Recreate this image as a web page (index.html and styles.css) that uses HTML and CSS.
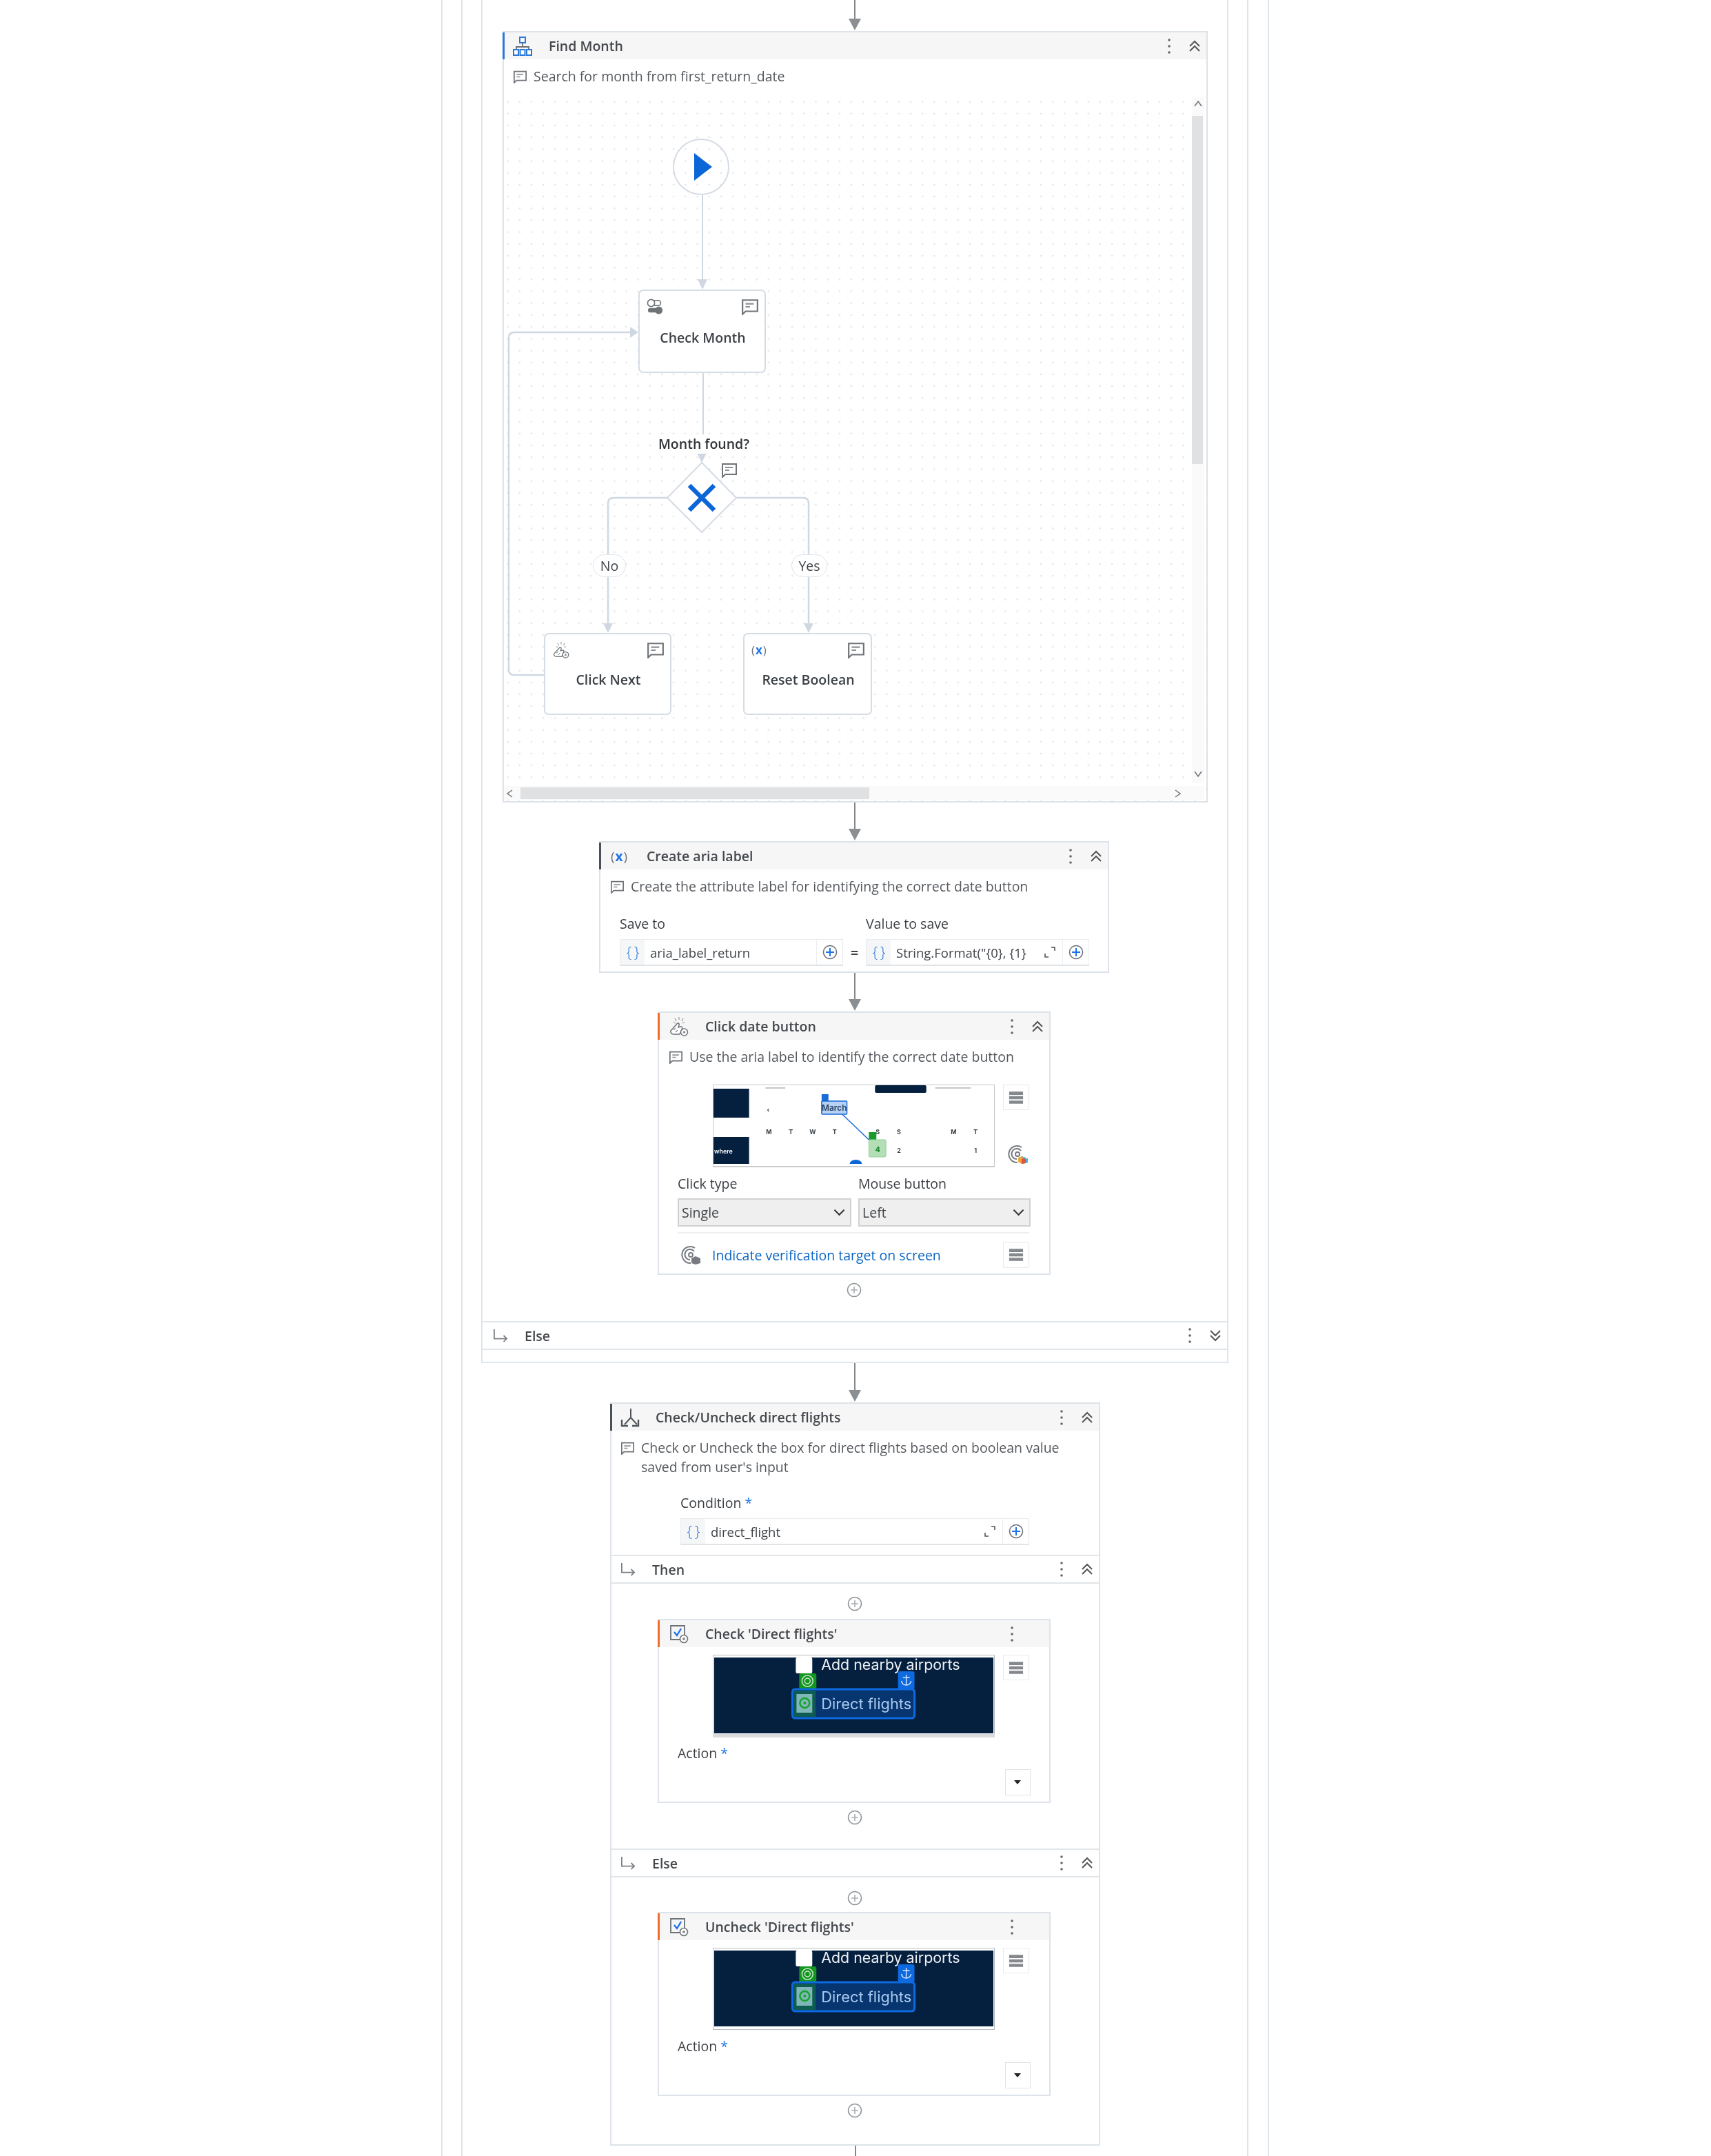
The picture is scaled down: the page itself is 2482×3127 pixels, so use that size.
FILE: index.html
```html
<!DOCTYPE html>
<html>
  <head>
    <meta charset="UTF-8">
    <title>Find Month workflow</title>
    <link rel="stylesheet" href="styles.css">
  </head>
  <body>
    <svg class="defs" width="0" height="0">
      <symbol id="i-comment" viewBox="0 0 24 22">
        <path d="M2 2H22V17H6L2 21Z" fill="#fff" stroke="#6f7378" stroke-width="2"/>
        <path d="M6 7H17M6 11H12" stroke="#8c9095" stroke-width="2"/>
      </symbol>
      <symbol id="i-kebab" viewBox="0 0 6 24">
        <circle cx="3" cy="3" r="1.8" fill="#666"/>
        <circle cx="3" cy="12" r="1.8" fill="#666"/>
        <circle cx="3" cy="21" r="1.8" fill="#666"/>
      </symbol>
      <symbol id="i-up" viewBox="0 0 18 18">
        <path d="M2 9L9 2L16 9M2 16L9 9L16 16" fill="none" stroke="#555" stroke-width="2"/>
      </symbol>
      <symbol id="i-down" viewBox="0 0 18 18">
        <path d="M2 2L9 9L16 2M2 9L9 16L16 9" fill="none" stroke="#555" stroke-width="2"/>
      </symbol>
      <symbol id="i-else" viewBox="0 0 24 22">
        <path d="M2 1V16H22M17 11L22 16L17 21" fill="none" stroke="#7d8186" stroke-width="2"/>
      </symbol>
      <symbol id="i-plus" viewBox="0 0 22 22">
        <circle cx="11" cy="11" r="9.5" fill="#fff" stroke="#8d9296" stroke-width="1.6"/>
        <path d="M11 6V16M6 11H16" stroke="#a9adb1" stroke-width="1.6"/>
      </symbol>
      <symbol id="i-plus-blue" viewBox="0 0 22 22">
        <circle cx="11" cy="11" r="9.5" fill="#fff" stroke="#6d7277" stroke-width="1.6"/>
        <path d="M11 5V17M5 11H17" stroke="#1a73e8" stroke-width="2"/>
      </symbol>
      <symbol id="i-expand" viewBox="0 0 18 18">
        <path d="M11 2H16V7M2 11V16H7" fill="none" stroke="#555" stroke-width="1.6"/>
      </symbol>
      <symbol id="i-click" viewBox="0 0 28 28">
        <path d="M14 0V4M8 2L10 6M20 2L18 6M6 8L9 9M22 8L19 9" stroke="#9a9ea2" stroke-width="1.3"/>
        <path d="M2 20L11 10C12 8 15 9 14 12L13 15L17 14C19 14 19 16 18 18L15 25H6C3 25 1 22 2 20Z" fill="#fff" stroke="#6f7378" stroke-width="1.5"/>
        <path d="M6 19L9 16M9 22L12 19" stroke="#8c9095" stroke-width="1.3"/>
        <circle cx="21.500" cy="22" r="5" fill="#fff" stroke="#6f7378" stroke-width="1.5"/>
        <circle cx="21.500" cy="22" r="1.800" fill="#8c9095"/>
      </symbol>
      <symbol id="i-check" viewBox="0 0 28 28">
        <path d="M16 22H2V2H22V15" fill="none" stroke="#6f7378" stroke-width="1.8"/>
        <path d="M7 11L11 16L17 6" fill="none" stroke="#1a73e8" stroke-width="2.4"/>
        <circle cx="21" cy="21" r="5.5" fill="#fff" stroke="#6f7378" stroke-width="1.6"/>
        <circle cx="21" cy="21" r="2" fill="#8c9095"/>
      </symbol>
      <symbol id="i-if" viewBox="0 0 28 28">
        <path d="M15 1V14L6 24M15 14L24 24" fill="none" stroke="#50565c" stroke-width="2"/>
        <path d="M2 17V26H11M26 17V26H17" fill="none" stroke="#50565c" stroke-width="2.4"/>
      </symbol>
      <symbol id="i-scope" viewBox="0 0 28 28">
        <rect x="10" y="1" width="8" height="8" fill="#fff" stroke="#2a78d8" stroke-width="2"/>
        <path d="M14 9V15M5 18V15H23V18" fill="none" stroke="#6b6f74" stroke-width="1.8"/>
        <path d="M1 19H8V27H1ZM10.500 19H17.500V27H10.500ZM20 19H27V27H20Z" fill="#fff" stroke="#2a78d8" stroke-width="2"/>
      </symbol>
      <symbol id="i-toggles" viewBox="0 0 28 26">
        <rect x="2" y="3" width="20" height="8" rx="4" fill="#fff" stroke="#6f7378" stroke-width="1.8"/>
        <circle cx="7" cy="7" r="5.500" fill="#fff" stroke="#6f7378" stroke-width="1.8"/>
        <rect x="2" y="15" width="18" height="7" rx="3.500" fill="#6f7378"/>
        <circle cx="19" cy="18.500" r="6" fill="#6f7378"/>
      </symbol>
      <symbol id="i-menu" viewBox="0 0 24 24">
        <path d="M1 2.500H23V7.500H1ZM1 9.500H23V14.500H1ZM1 16.500H23V21.500H1Z" fill="#85888c"/>
      </symbol>
      <symbol id="i-target" viewBox="0 0 30 28">
        <path d="M20 4A12 12 0 1 0 14 26" fill="none" stroke="#777b80" stroke-width="2"/>
        <path d="M19 9A7.500 7.500 0 1 0 13 21" fill="none" stroke="#777b80" stroke-width="2"/>
        <circle cx="14" cy="14" r="3" fill="none" stroke="#777b80" stroke-width="2"/>
      </symbol>
    </svg>

    <div class="rail-outer">
      <div class="rail-inner">
        <div class="if-box">
          <div class="connector conn-top"></div>

          <section class="card card-find">
            <div class="card-head accent-blue">
              <svg class="head-icon"><use href="#i-scope"/></svg>
              <span class="card-title">Find Month</span>
              <svg class="kebab"><use href="#i-kebab"/></svg>
              <svg class="chev"><use href="#i-up"/></svg>
            </div>
            <div class="card-desc desc-find">
              <svg class="desc-icon"><use href="#i-comment"/></svg>
              <span>Search for month from first_return_date</span>
            </div>

            <div class="canvas">
              <svg class="wires" width="1019" height="1022">
                <g fill="none" stroke="#cfd8e2">
                  <path d="M288 143V268" stroke-width="2"/>
                  <path d="M58 839H15Q7 839 7 831V350Q7 342 15 342H185" stroke-width="2.500"/>
                  <path d="M289 401V490" stroke-width="2"/>
                  <path d="M237 582H159Q151 582 151 590V766" stroke-width="2.500"/>
                  <path d="M337 582H434Q442 582 442 590V766" stroke-width="2.500"/>
                </g>
                <g fill="#cfd8e2">
                  <path d="M281 265H295L288 280Z"/>
                  <path d="M183 334V350L195 342Z"/>
                  <path d="M280 517H294L287 531Z"/>
                  <path d="M144 764H158L151 778Z"/>
                  <path d="M435 764H449L442 778Z"/>
                </g>
                <path d="M287 531L337 582L287 632L237 582Z" fill="#fff" stroke="#d5dce4" stroke-width="2" stroke-linejoin="round"/>
                <path d="M269 564L305 600M305 564L269 600" stroke="#0b66d8" stroke-width="6.500"/>
                <path d="M276 82V122L302 102Z" fill="#0b66d8"/>
              </svg>
              <div class="start-node"></div>
              <svg class="wire-comment"><use href="#i-comment"/></svg>
              <div class="gate-label">Month found?</div>
              <div class="pill pill-no">No</div>
              <div class="pill pill-yes">Yes</div>

              <div class="node node-check">
                <div class="node-icons">
                  <svg class="node-icon"><use href="#i-toggles"/></svg>
                  <svg class="node-icon"><use href="#i-comment"/></svg>
                </div>
                <div class="node-label">Check Month</div>
              </div>
              <div class="node node-next">
                <div class="node-icons">
                  <svg class="node-icon"><use href="#i-click"/></svg>
                  <svg class="node-icon"><use href="#i-comment"/></svg>
                </div>
                <div class="node-label">Click Next</div>
              </div>
              <div class="node node-reset">
                <div class="node-icons">
                  <span class="var-icon">(<b>x</b>)</span>
                  <svg class="node-icon"><use href="#i-comment"/></svg>
                </div>
                <div class="node-label">Reset Boolean</div>
              </div>

              <div class="vbar">
                <svg class="bar-arrow" viewBox="0 0 14 14"><path d="M2 10L7 3L12 10"/></svg>
                <div class="vthumb"></div>
                <svg class="bar-arrow arrow-low" viewBox="0 0 14 14"><path d="M2 4L7 11L12 4"/></svg>
              </div>
              <div class="hbar">
                <svg class="bar-arrow" viewBox="0 0 14 14"><path d="M10 2L3 7L10 12"/></svg>
                <div class="hthumb"></div>
                <svg class="bar-arrow arrow-end" viewBox="0 0 14 14"><path d="M4 2L11 7L4 12"/></svg>
              </div>
            </div>
          </section>

          <div class="connector conn-56"></div>

          <section class="card card-assign">
            <div class="card-head accent-slate">
              <span class="var-icon head-var">(<b>x</b>)</span>
              <span class="card-title">Create aria label</span>
              <svg class="kebab"><use href="#i-kebab"/></svg>
              <svg class="chev"><use href="#i-up"/></svg>
            </div>
            <div class="card-desc">
              <svg class="desc-icon"><use href="#i-comment"/></svg>
              <span>Create the attribute label for identifying the correct date button</span>
            </div>
            <div class="assign-grid">
              <div class="field-col">
                <div class="field-label">Save to</div>
                <div class="field">
                  <span class="brace">{ }</span>
                  <span class="field-value">aria_label_return</span>
                  <span class="field-plus"><svg class="plus-sm"><use href="#i-plus-blue"/></svg></span>
                </div>
              </div>
              <div class="equals">=</div>
              <div class="field-col">
                <div class="field-label">Value to save</div>
                <div class="field">
                  <span class="brace">{ }</span>
                  <span class="field-value">String.Format("{0}, {1}</span>
                  <svg class="expand"><use href="#i-expand"/></svg>
                  <span class="field-plus"><svg class="plus-sm"><use href="#i-plus-blue"/></svg></span>
                </div>
              </div>
            </div>
          </section>

          <div class="connector conn-56"></div>

          <section class="card task-card card-click">
            <div class="card-head accent-orange">
              <svg class="head-icon"><use href="#i-click"/></svg>
              <span class="card-title">Click date button</span>
              <svg class="kebab"><use href="#i-kebab"/></svg>
              <svg class="chev"><use href="#i-up"/></svg>
            </div>
            <div class="card-desc desc-click">
              <svg class="desc-icon"><use href="#i-comment"/></svg>
              <span>Use the aria label to identify the correct date button</span>
            </div>
            <div class="thumb-row thumb-row-click">
              <svg class="thumb" width="409" height="120" viewBox="0 0 412 120" preserveAspectRatio="none">
                <rect x="0.500" y="0.500" width="411" height="118" fill="#fff" stroke="#c4c8cc"/>
                <rect y="118" width="412" height="2" fill="#c9cccf"/>
                <rect x="1" y="6" width="52" height="42" fill="#05203f"/>
                <rect x="1" y="76" width="52" height="39" fill="#05203f"/>
                <rect x="237" y="1" width="75" height="11" rx="2" fill="#05203f"/>
                <path d="M77 5H106M325 5H377" stroke="#c4c8cc" stroke-width="2"/>
                <text class="thumb-where" x="2" y="100">where</text>
                <text class="thumb-day" x="81" y="40">‹</text>
                <text class="thumb-day" x="82" y="72">M</text>
                <text class="thumb-day" x="114" y="72">T</text>
                <text class="thumb-day" x="146" y="72">W</text>
                <text class="thumb-day" x="178" y="72">T</text>
                <text class="thumb-day" x="241" y="72">S</text>
                <text class="thumb-day" x="272" y="72">S</text>
                <text class="thumb-day" x="352" y="72">M</text>
                <text class="thumb-day" x="384" y="72">T</text>
                <text class="thumb-day" x="272" y="99">2</text>
                <text class="thumb-day" x="384" y="99">1</text>
                <path d="M189 43L228 80" stroke="#1a6bd8" stroke-width="1.500"/>
                <rect x="159" y="14" width="10" height="10" fill="#1a6bd8"/>
                <rect x="159" y="24" width="37" height="19" rx="1" fill="#b7d1f4" stroke="#1a6bd8" stroke-width="1.500"/>
                <text class="thumb-month" x="177.500" y="38">March</text>
                <rect x="228" y="69" width="11" height="11" fill="#189a2c"/>
                <rect x="228" y="80" width="25" height="25" rx="2" fill="#b4dfb6" stroke="#93cf98"/>
                <text class="thumb-green" x="241" y="98">4</text>
                <path d="M200 115A9 6 0 0 1 218 115Z" fill="#0b66d8"/>
              </svg>
              <div class="thumb-tools">
                <span class="menu-btn"><svg><use href="#i-menu"/></svg></span>
                <svg class="target-icon" viewBox="0 0 30 28">
                  <use href="#i-target" width="30" height="28"/>
                  <path d="M20 17L26 19V27L20 28L15 25V19Z" fill="#f0a23c"/>
                  <path d="M20 21L26 19V27L20 28Z" fill="#e0533c"/>
                  <path d="M26 19L20 17L24 21L29 20V26L26 27Z" fill="#42b4e6"/>
                </svg>
              </div>
            </div>
            <div class="select-grid">
              <label class="select-col">
                <span class="field-label">Click type</span>
                <select class="ui-select"><option>Single</option></select>
              </label>
              <label class="select-col">
                <span class="field-label">Mouse button</span>
                <select class="ui-select"><option>Left</option></select>
              </label>
            </div>
            <div class="verify-row">
              <svg class="verify-icon" viewBox="0 0 30 28">
                <use href="#i-target" width="30" height="28"/>
                <path d="M21 16L28 19V26L21 28L15 26V19Z" fill="#777b80"/>
              </svg>
              <a class="verify-link">Indicate verification target on screen</a>
              <span class="menu-btn"><svg><use href="#i-menu"/></svg></span>
            </div>
          </section>

          <div class="plus-slot plus-click"><svg class="plus"><use href="#i-plus"/></svg></div>

          <div class="branch-bar else-top">
            <svg class="branch-icon"><use href="#i-else"/></svg>
            <span class="branch-title">Else</span>
            <svg class="kebab"><use href="#i-kebab"/></svg>
            <svg class="chev"><use href="#i-down"/></svg>
          </div>
          <div class="if-foot"></div>
        </div>

        <div class="connector conn-if"></div>

        <section class="card card-if">
          <div class="card-head accent-slate">
            <svg class="head-icon"><use href="#i-if"/></svg>
            <span class="card-title">Check/Uncheck direct flights</span>
            <svg class="kebab"><use href="#i-kebab"/></svg>
            <svg class="chev"><use href="#i-up"/></svg>
          </div>
          <div class="card-desc desc-if">
            <svg class="desc-icon"><use href="#i-comment"/></svg>
            <span>Check or Uncheck the box for direct flights based on boolean value saved from user's input</span>
          </div>
          <div class="condition">
            <div class="field-label">Condition <span class="star">*</span></div>
            <div class="field">
              <span class="brace">{ }</span>
              <span class="field-value">direct_flight</span>
              <svg class="expand"><use href="#i-expand"/></svg>
              <span class="field-plus"><svg class="plus-sm"><use href="#i-plus-blue"/></svg></span>
            </div>
          </div>

          <div class="branch-bar">
            <svg class="branch-icon"><use href="#i-else"/></svg>
            <span class="branch-title">Then</span>
            <svg class="kebab"><use href="#i-kebab"/></svg>
            <svg class="chev"><use href="#i-up"/></svg>
          </div>
          <div class="plus-slot plus-then"><svg class="plus"><use href="#i-plus"/></svg></div>

          <section class="card task-card card-check">
            <div class="card-head accent-orange">
              <svg class="head-icon"><use href="#i-check"/></svg>
              <span class="card-title">Check 'Direct flights'</span>
              <svg class="kebab kebab-only"><use href="#i-kebab"/></svg>
            </div>
            <div class="thumb-row">
              <svg class="thumb" width="409" height="120" viewBox="0 0 411 120" preserveAspectRatio="none">
                <rect x="0.500" y="0.500" width="410" height="118" fill="#fff" stroke="#b9bdc1"/>
                <rect y="115" width="411" height="5" fill="#d9dbdd"/>
                <rect x="2" y="4" width="407" height="110" fill="#05203f"/>
                <rect x="121" y="4" width="24" height="23" rx="2" fill="#fff"/>
                <text class="thumb-add" x="158" y="22">Add nearby airports</text>
                <rect x="126" y="27" width="25" height="23" rx="3" fill="#12961f"/>
                <circle cx="138" cy="38" r="8" fill="none" stroke="#cde8cf" stroke-width="1.500"/>
                <circle cx="138" cy="38" r="4" fill="none" stroke="#cde8cf" stroke-width="1.500"/>
                <rect x="270" y="24" width="24" height="26" rx="3" fill="#0d6ae0"/>
                <path d="M282 29V44M277 33H287M275 38Q276 44 282 44Q288 44 289 38" fill="none" stroke="#d7e7fb" stroke-width="1.500"/>
                <rect x="116" y="50" width="178" height="42" rx="4" fill="#07356f" stroke="#0d6ae0" stroke-width="3"/>
                <rect x="118" y="52" width="32" height="38" fill="#0f5c55"/>
                <rect x="122" y="57" width="23" height="27" fill="#7fb6b8"/>
                <circle cx="134" cy="70" r="7" fill="none" stroke="#16a52a" stroke-width="2.500"/>
                <circle cx="134" cy="70" r="2" fill="#16a52a"/>
                <text class="thumb-direct" x="158" y="79">Direct flights</text>
              </svg>
              <span class="menu-btn"><svg><use href="#i-menu"/></svg></span>
            </div>
            <div class="field-label action-label">Action <span class="star">*</span></div>
            <div class="action-row"><span class="drop-btn"></span></div>
          </section>

          <div class="plus-slot plus-after"><svg class="plus"><use href="#i-plus"/></svg></div>

          <div class="branch-bar else-mid">
            <svg class="branch-icon"><use href="#i-else"/></svg>
            <span class="branch-title">Else</span>
            <svg class="kebab"><use href="#i-kebab"/></svg>
            <svg class="chev"><use href="#i-up"/></svg>
          </div>
          <div class="plus-slot plus-then plus-else"><svg class="plus"><use href="#i-plus"/></svg></div>

          <section class="card task-card card-check">
            <div class="card-head accent-orange">
              <svg class="head-icon"><use href="#i-check"/></svg>
              <span class="card-title">Uncheck 'Direct flights'</span>
              <svg class="kebab kebab-only"><use href="#i-kebab"/></svg>
            </div>
            <div class="thumb-row">
              <svg class="thumb" width="409" height="120" viewBox="0 0 411 120" preserveAspectRatio="none">
                <rect x="0.500" y="0.500" width="410" height="118" fill="#fff" stroke="#b9bdc1"/>
                <rect x="2" y="4" width="407" height="110" fill="#05203f"/>
                <rect x="121" y="4" width="24" height="23" rx="2" fill="#fff"/>
                <text class="thumb-add" x="158" y="22">Add nearby airports</text>
                <rect x="126" y="27" width="25" height="23" rx="3" fill="#12961f"/>
                <circle cx="138" cy="38" r="8" fill="none" stroke="#cde8cf" stroke-width="1.500"/>
                <circle cx="138" cy="38" r="4" fill="none" stroke="#cde8cf" stroke-width="1.500"/>
                <rect x="270" y="24" width="24" height="26" rx="3" fill="#0d6ae0"/>
                <path d="M282 29V44M277 33H287M275 38Q276 44 282 44Q288 44 289 38" fill="none" stroke="#d7e7fb" stroke-width="1.500"/>
                <rect x="116" y="50" width="178" height="42" rx="4" fill="#07356f" stroke="#0d6ae0" stroke-width="3"/>
                <rect x="118" y="52" width="32" height="38" fill="#0f5c55"/>
                <rect x="122" y="57" width="23" height="27" fill="#7fb6b8"/>
                <circle cx="134" cy="70" r="7" fill="none" stroke="#16a52a" stroke-width="2.500"/>
                <circle cx="134" cy="70" r="2" fill="#16a52a"/>
                <text class="thumb-direct" x="158" y="79">Direct flights</text>
              </svg>
              <span class="menu-btn"><svg><use href="#i-menu"/></svg></span>
            </div>
            <div class="field-label action-label">Action <span class="star">*</span></div>
            <div class="action-row"><span class="drop-btn"></span></div>
          </section>

          <div class="plus-slot plus-after plus-last"><svg class="plus"><use href="#i-plus"/></svg></div>
        </section>

        <div class="tail-line"></div>
      </div>
    </div>
  </body>
</html>
```

FILE: styles.css
```css
* {
  box-sizing: border-box;
}
html,
body {
  margin: 0;
  height: 3127px;
  overflow: hidden;
  background: #fff;
}
body {
  font-family: "Open Sans", "Noto Sans", sans-serif;
  font-size: 19.5px;
  color: #3f4348;
  filter: blur(0.5px);
}
.defs {
  position: absolute;
}

/* nested columns at the sides of the page */
.rail-outer {
  width: 1201px;
  height: 3127px;
  margin-left: 640px;
  border-left: 2px solid #dfe6eb;
  border-right: 2px solid #dfe6eb;
  padding: 0 28px 0 27px;
}
.rail-inner {
  height: 3127px;
  border-left: 2px solid #dfe6eb;
  border-right: 2px solid #dfe6eb;
  padding: 0 27px 0 27px;
}
.if-box {
  height: 1977px;
  border-left: 2px solid #dfe6eb;
  border-right: 2px solid #dfe6eb;
  border-bottom: 2px solid #dfe6eb;
}
.if-foot {
  height: 18px;
}

/* arrows between activities */
.connector {
  position: relative;
  width: 18px;
}
.connector::before {
  content: "";
  position: absolute;
  top: 0;
  bottom: 10px;
  left: 8px;
  width: 2px;
  background: #85888b;
}
.connector::after {
  content: "";
  position: absolute;
  bottom: 1px;
  left: 0;
  border-left: 9px solid transparent;
  border-right: 9px solid transparent;
  border-top: 17px solid #8c8f92;
}
.conn-top {
  height: 45px;
  margin-left: 531px;
}
.conn-56 {
  height: 56px;
  margin-left: 531px;
}
.conn-if {
  height: 57px;
  margin-left: 533px;
}
.tail-line {
  width: 2px;
  height: 20px;
  margin-left: 542px;
  background: #85888b;
}

/* cards */
.card {
  border: 2px solid #dde3e8;
  background: #fff;
}
.card-head {
  display: flex;
  align-items: center;
  height: 39px;
  margin-left: -2px;
  padding-left: 14px;
  background: #f6f6f6;
  border-left: 3px solid #4a5057;
}
.accent-blue {
  padding-left: 12px;
  border-left-color: #2a78d8;
}
.accent-slate {
  border-left-color: #4a5057;
}
.accent-orange {
  border-left-color: #f26b2b;
}
.head-icon {
  width: 28px;
  height: 28px;
  flex: none;
}
.card-title {
  margin-left: 24px;
  font-weight: 600;
  color: #44484d;
}
.kebab {
  width: 6px;
  height: 24px;
  margin-left: auto;
  flex: none;
}
.chev {
  width: 18px;
  height: 18px;
  margin: 0 8px 0 25px;
  flex: none;
}
.kebab-only {
  margin-right: 51px;
}
.card-desc {
  display: flex;
  align-items: flex-start;
  gap: 9px;
  line-height: 28px;
  padding: 11px 14px 0 14px;
  color: #54585d;
}
.desc-icon {
  width: 21px;
  height: 19px;
  margin-top: 5px;
  flex: none;
}

/* Find Month */
.card-find {
  width: 1023px;
  margin-left: 29px;
}
.desc-find {
  height: 54px;
  padding-left: 13px;
}
.canvas {
  position: relative;
  width: 1019px;
  height: 1022px;
  background-image: radial-gradient(circle, #e2e5e8 1.2px, transparent 1.6px);
  background-size: 17.2px 17.2px;
  background-position: -3px -1px;
}
.wires {
  position: absolute;
  top: 0;
  left: 0;
}
.start-node {
  position: absolute;
  top: 61px;
  left: 245px;
  width: 82px;
  height: 82px;
  border: 2px solid #d5dce4;
  border-radius: 50%;
}
.wire-comment {
  position: absolute;
  top: 531px;
  left: 315px;
  width: 24px;
  height: 22px;
}
.gate-label {
  position: absolute;
  top: 490px;
  left: 220px;
  width: 140px;
  text-align: center;
  font-weight: 600;
  line-height: 28px;
  color: #2f3439;
  background: #fff;
}
.pill {
  position: absolute;
  top: 664px;
  height: 33px;
  border: 1px solid #e0e5ea;
  border-radius: 16px;
  background: #fff;
  text-align: center;
  line-height: 31px;
}
.pill-no {
  left: 129px;
  width: 48px;
}
.pill-yes {
  left: 417px;
  width: 52px;
}
.node {
  position: absolute;
  padding: 11px 8px 0 10px;
  border: 2px solid #d5dce4;
  border-radius: 7px;
  background: #fff;
}
.node-check {
  top: 280px;
  left: 195px;
  width: 185px;
  height: 121px;
}
.node-next {
  top: 778px;
  left: 58px;
  width: 185px;
  height: 119px;
}
.node-reset {
  top: 778px;
  left: 347px;
  width: 187px;
  height: 119px;
}
.node-icons {
  display: flex;
  justify-content: space-between;
  height: 25px;
}
.node-icon {
  width: 26px;
  height: 24px;
}
.node-label {
  margin-top: 18px;
  text-align: center;
  font-weight: 600;
  line-height: 28px;
  color: #3c4146;
}
.node-next .node-label,
.node-reset .node-label {
  margin-top: 16px;
}
.var-icon {
  color: #6f7378;
  font-size: 17px;
  line-height: 24px;
}
.var-icon b {
  color: #1a73e8;
  padding: 0 1px;
}
.head-var {
  width: 28px;
  flex: none;
  font-size: 19px;
}
.vbar {
  position: absolute;
  top: 0;
  right: 3px;
  bottom: 26px;
  width: 18px;
  background: #fafafa;
}
.vthumb {
  position: absolute;
  top: 28px;
  left: 0;
  width: 16px;
  height: 505px;
  background: #dfe1e3;
}
.hbar {
  position: absolute;
  left: 0;
  right: 3px;
  bottom: 2px;
  height: 20px;
  background: #fafafa;
}
.hthumb {
  position: absolute;
  top: 2px;
  left: 24px;
  width: 506px;
  height: 17px;
  background: #dfe1e3;
}
.bar-arrow {
  position: absolute;
  top: 4px;
  left: 2px;
  width: 14px;
  height: 14px;
}
.bar-arrow path {
  fill: none;
  stroke: #6f7378;
  stroke-width: 1.5;
}
.arrow-low {
  top: auto;
  bottom: 7px;
}
.arrow-end {
  left: 970px;
}

/* Create aria label */
.card-assign {
  width: 740px;
  margin-left: 169px;
}
.assign-grid {
  display: flex;
  align-items: flex-end;
  padding: 26px 0 8px 28px;
}
.field-col {
  width: 324px;
}
.equals {
  width: 33px;
  height: 39px;
  text-align: center;
  line-height: 39px;
  font-weight: 700;
}
.field-label {
  display: block;
  color: #3a3e43;
  line-height: 28px;
}
.field {
  display: flex;
  align-items: center;
  height: 39px;
  margin-top: 8px;
  border: 1px solid #e8eaec;
  border-bottom: 2px solid #e1e4e7;
  background: #fff;
}
.brace {
  width: 35px;
  height: 100%;
  flex: none;
  background: #f5f6f7;
  color: #2a78d8;
  text-align: center;
  line-height: 34px;
  font-size: 22px;
  font-weight: 300;
  letter-spacing: -1px;
}
.field-value {
  margin-left: 8px;
  flex: 1;
  min-width: 0;
  font-size: 18.5px;
  color: #3f4348;
  white-space: nowrap;
}
.field-plus {
  display: flex;
  align-items: center;
  justify-content: center;
  width: 38px;
  height: 100%;
  flex: none;
  border-left: 1px solid #eceef0;
}
.plus-sm {
  width: 22px;
  height: 22px;
}
.expand {
  width: 18px;
  height: 18px;
  margin: 0 9px 0 8px;
  flex: none;
}

/* activities with a picture */
.task-card {
  width: 570px;
  margin-left: 67px;
}
.card-click {
  margin-left: 254px;
  padding-bottom: 10px;
}
.desc-click {
  height: 50px;
}
.thumb-row {
  display: flex;
  align-items: flex-start;
  gap: 12px;
  margin: 11px 0 0 78px;
}
.thumb-row-click {
  margin-top: 15px;
  height: 120px;
}
.thumb {
  display: block;
  flex: none;
}
.thumb-tools {
  display: flex;
  flex-direction: column;
  height: 120px;
  justify-content: space-between;
}
.menu-btn {
  display: flex;
  align-items: center;
  justify-content: center;
  width: 38px;
  height: 37px;
  flex: none;
  border: 1px solid #e8eaec;
}
.menu-btn svg {
  width: 22px;
  height: 22px;
}
.target-icon {
  width: 30px;
  height: 28px;
  margin: 0 0 5px 7px;
}
.thumb text {
  font-family: "Inter", "Open Sans", sans-serif;
}
.thumb-where {
  font-size: 9px;
  fill: #fff;
  font-weight: 600;
}
.thumb-day {
  font-size: 9px;
  font-weight: 700;
  fill: #3b4147;
  text-anchor: middle;
}
.thumb-month {
  font-size: 12px;
  font-weight: 600;
  fill: #27425f;
  text-anchor: middle;
}
.thumb-green {
  font-size: 11px;
  font-weight: 700;
  fill: #17852a;
  text-anchor: middle;
}
.thumb-add {
  font-size: 21.500px;
  fill: #eef1f4;
}
.thumb-direct {
  font-size: 22px;
  fill: #a9c9ef;
}
.select-grid {
  display: grid;
  grid-template-columns: 252px 250px;
  gap: 10px;
  margin: 10px 0 0 27px;
}
.select-col {
  position: relative;
  display: flex;
  flex-direction: column;
}
.select-col::after {
  content: "";
  position: absolute;
  right: 12px;
  bottom: 18px;
  width: 9px;
  height: 9px;
  border-right: 2px solid #333;
  border-bottom: 2px solid #333;
  transform: rotate(45deg);
}
.ui-select {
  height: 41px;
  margin-top: 7px;
  padding-left: 4px;
  border: 2px solid #cfd1d3;
  border-radius: 0;
  background-color: #efefef;
  font: inherit;
  color: #3f4348;
  appearance: none;
}
.verify-row {
  display: flex;
  align-items: center;
  height: 50px;
  margin: 8px 29px 0 27px;
  padding: 14px 0 0 5px;
  border-top: 2px solid #eeeff1;
}
.verify-icon {
  width: 30px;
  height: 28px;
  flex: none;
}
.verify-link {
  margin-left: 15px;
  color: #0b66c3;
  flex: 1;
}
.plus-slot {
  display: flex;
  justify-content: center;
}
.plus {
  width: 22px;
  height: 22px;
}
.plus-click {
  height: 67px;
  margin-left: -3px;
  padding-top: 11px;
  align-items: flex-start;
}

/* branch bars */
.branch-bar {
  display: flex;
  align-items: center;
  height: 42px;
  padding-left: 13px;
  border-top: 2px solid #e1e6ea;
  border-bottom: 2px solid #e1e6ea;
}
.branch-icon {
  width: 22px;
  height: 20px;
  flex: none;
}
.branch-title {
  margin-left: 24px;
  font-weight: 600;
  color: #44484d;
}
.else-top {
  padding-left: 15px;
}

/* If activity */
.card-if {
  width: 711px;
  height: 1078px;
  margin-left: 187px;
}
.card-if > .accent-slate {
  padding-left: 12px;
}
.card-if > .accent-slate .card-title {
  margin-left: 23px;
}
.desc-if {
  height: 75px;
  padding-left: 13px;
}
.condition {
  width: 506px;
  height: 105px;
  margin-left: 100px;
  padding-top: 16px;
}
.condition .field {
  margin-top: 8px;
}
.star {
  color: #1a73e8;
}
.plus-then {
  padding: 18px 0 11px;
  margin-left: -2px;
}
.plus-else {
  padding: 19px 0 9px;
}
.plus-after {
  padding: 10px 0 34px;
  margin-left: -2px;
}
.plus-last {
  padding-bottom: 0;
}
.card-check {
  height: 267px;
}
.action-label {
  margin: 9px 0 0 27px;
}
.action-row {
  display: flex;
  justify-content: flex-end;
  margin: 9px 27px 0 0;
}
.drop-btn {
  position: relative;
  width: 37px;
  height: 38px;
  border: 1px solid #dfe3e6;
}
.drop-btn::after {
  content: "";
  position: absolute;
  top: 15px;
  left: 12px;
  border-left: 5px solid transparent;
  border-right: 5px solid transparent;
  border-top: 6px solid #222;
}
```
